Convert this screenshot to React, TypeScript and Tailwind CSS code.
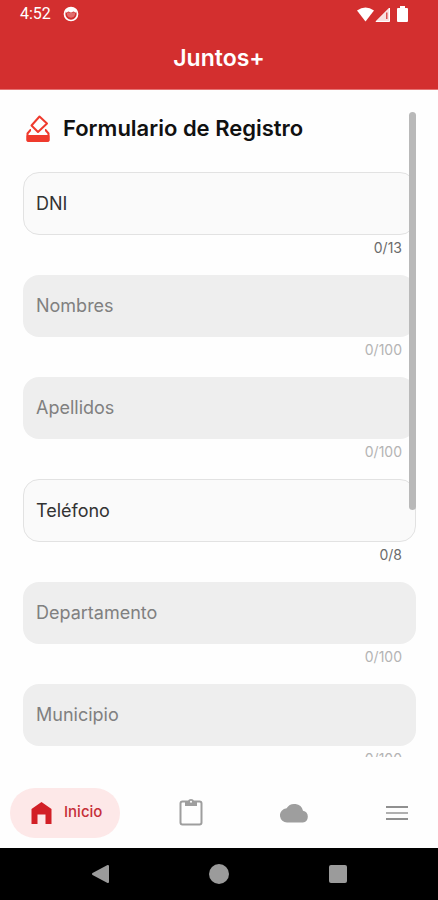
import { useState } from 'react';

export default function App() {
  const [values, setValues] = useState<Record<string, string>>({});

  const fields = [
    { id: 'dni', label: 'DNI', max: 13, enabled: true },
    { id: 'nombres', label: 'Nombres', max: 100, enabled: false },
    { id: 'apellidos', label: 'Apellidos', max: 100, enabled: false },
    { id: 'telefono', label: 'Teléfono', max: 8, enabled: true },
    { id: 'departamento', label: 'Departamento', max: 100, enabled: false },
    { id: 'municipio', label: 'Municipio', max: 100, enabled: false },
  ];

  return (
    <div className="flex h-screen flex-col overflow-hidden bg-[#fefefe] font-['Inter',sans-serif]">
      {/* Header */}
      <header className="shrink-0 border-b border-[#e57373] bg-[#d32f2f] text-white">
        <div className="flex h-7 items-center justify-between pr-[30px] pl-5">
          <div className="flex items-center gap-3">
            <span className="font-['Roboto',sans-serif] text-base">4:52</span>
            <svg className="h-4 w-4" viewBox="0 0 16 16">
              <circle cx="8" cy="8" r="6.5" fill="none" stroke="#fff" strokeWidth="1.7" />
              <path d="M2 4Q8-1 14 4L13 6.800 10.600 5.600 8 6.600 5.400 5.600 3 6.800Z" fill="#fff" />
              <path d="M4 6.500h8v2.600q-1 2.600-4 2.600T4 9.100Z" fill="#fff" opacity="0.3" />
            </svg>
          </div>
          <div className="flex items-center gap-px">
            <svg className="h-[15px] w-[17px]" viewBox="0 0 17 15" fill="#fff">
              <path d="M0 3.500Q8.500-2.500 17 3.500L8.500 14.500Z" />
            </svg>
            <svg className="h-[15px] w-[15px]" viewBox="0 0 15 15">
              <path d="M14.500 1V14.500H1Z" fill="#fff" fillOpacity="0.85" stroke="#fff" />
              <path d="M11 5.500h1.500V12H11Z" fill="#d32f2f" opacity="0.8" />
            </svg>
            <svg className="ml-[6px] h-4 w-[11px]" viewBox="0 0 11 16" fill="#fff">
              <path d="M3 0h5v2h2q1 0 1 1v12q0 1-1 1H1q-1 0-1-1V3q0-1 1-1h2Z" />
            </svg>
          </div>
        </div>
        <h1 className="flex h-[61px] items-center justify-center text-[23px] font-semibold">Juntos+</h1>
      </header>

      {/* Form */}
      <main className="relative mx-[22px] mt-[22px] min-h-0 flex-1 pl-px">
        <div className="h-full overflow-y-auto [scrollbar-width:none]">
          <h2 className="flex h-8 items-center gap-[13px] pl-[3px] text-[22px] font-semibold text-[#111]">
            <svg className="h-[27px] w-6" viewBox="0 0 24 27" fill="none" stroke="#ef3a2d" strokeWidth="2" strokeLinejoin="round">
              <path d="M13.500 1.500L21 8.500 12 17 5.500 10.500Z" />
              <path d="M5 15H4.500L1.500 18.500V25Q1.500 26 2.500 26H21.500Q22.500 26 22.500 25V18.500L19.500 15H19" />
              <path d="M1.500 21H22.500V25.500H1.500Z" fill="#ef3a2d" />
            </svg>
            Formulario de Registro
          </h2>
          <form className="mt-7">
            {fields.map((field) => {
              const value = values[field.id] ?? '';
              return (
                <div key={field.id}>
                  <div className="relative">
                    <input
                      id={field.id}
                      type="text"
                      maxLength={field.max}
                      disabled={!field.enabled}
                      value={value}
                      onChange={(e) => setValues({ ...values, [field.id]: e.target.value })}
                      className={
                        field.enabled
                          ? 'block h-[63px] w-full rounded-2xl border border-[#e2e2e2] bg-[#fafafa] px-[13px] text-lg text-[#222] outline-none'
                          : 'block h-[62px] w-full rounded-2xl bg-[#eeeeee] px-[13px] text-lg text-[#777] outline-none'
                      }
                    />
                    {!value && (
                      <label
                        htmlFor={field.id}
                        className={
                          field.enabled
                            ? 'absolute inset-y-0 left-[13px] flex items-center text-lg text-[#333]'
                            : 'absolute inset-y-0 left-[13px] flex items-center text-lg text-[#808080]'
                        }
                      >
                        {field.label}
                      </label>
                    )}
                  </div>
                  <div
                    className={
                      field.enabled
                        ? 'h-10 pt-[3px] pr-[14px] text-right text-sm text-[#6b6b6b]'
                        : 'h-10 pt-[3px] pr-[14px] text-right text-sm text-[#b4b4b4]'
                    }
                  >
                    {value.length}/{field.max}
                  </div>
                </div>
              );
            })}
          </form>
        </div>
        {/* Scroll thumb */}
        <div className="absolute top-0 right-0 h-[398px] w-[7px] rounded-full bg-[#b9b9b9]" />
      </main>

      {/* Tabs */}
      <nav className="flex h-[91px] shrink-0 items-center pt-5 pr-[27px] pl-[10px]">
        <a
          href="#inicio"
          className="flex h-[50px] items-center gap-3 rounded-full bg-[#fde8e8] pr-[18px] pl-[21px] text-[15px] font-medium text-[#c62f38]"
        >
          <svg className="h-[22px] w-[21px]" viewBox="0 0 21 22" fill="#d21f26">
            <path d="M10.500 0L20.500 7V22H14.500V12.500H6.500V22H0.500V7Z" />
          </svg>
          Inicio
        </a>
        <div className="ml-[57px] flex flex-1 items-center justify-between">
          <button type="button" aria-label="Formularios" className="flex w-7 justify-center">
            <svg className="h-7 w-6" viewBox="0 0 24 28" fill="none" stroke="#9e9e9e" strokeWidth="2">
              <rect x="1.500" y="2.500" width="21" height="23" rx="2" />
              <path d="M6 2H9Q9.500 0 12 0T15 2H18V7H6Z" fill="#9e9e9e" stroke="none" />
              <circle cx="12" cy="2.800" r="1" fill="#fff" stroke="none" />
            </svg>
          </button>
          <button type="button" aria-label="Nube" className="flex w-7 justify-center">
            <svg className="h-5 w-[29px] shrink-0" viewBox="0 0 29 20" fill="#9e9e9e">
              <path d="M7.500 19.500A7 7 0 0 1 6.600 5.300 9 9 0 0 1 23 7.700 6 6 0 0 1 22.800 19.500Z" />
            </svg>
          </button>
          <button type="button" aria-label="Menú" className="flex w-7 justify-center">
            <svg className="h-4 w-[22px]" viewBox="0 0 22 16" strokeWidth="2">
              <path d="M0 2H22M0 14H22" stroke="#909090" />
              <path d="M0 8H22" stroke="#b0b0b0" />
            </svg>
          </button>
        </div>
      </nav>

      {/* System buttons */}
      <footer className="flex h-[52px] shrink-0 items-center justify-between bg-black px-[90px]">
        <button type="button" aria-label="Atrás">
          <svg className="h-5 w-5" viewBox="0 0 20 20" fill="#9b9b9b" stroke="#9b9b9b" strokeWidth="2" strokeLinejoin="round">
            <path d="M18 2V18L3 10Z" />
          </svg>
        </button>
        <button type="button" aria-label="Pantalla principal">
          <svg className="h-5 w-5" viewBox="0 0 20 20" fill="#9b9b9b">
            <circle cx="10" cy="10" r="10" />
          </svg>
        </button>
        <button type="button" aria-label="Recientes">
          <svg className="h-5 w-5" viewBox="0 0 20 20" fill="#9b9b9b">
            <rect x="1" y="1" width="18" height="18" rx="2" />
          </svg>
        </button>
      </footer>
    </div>
  );
}
